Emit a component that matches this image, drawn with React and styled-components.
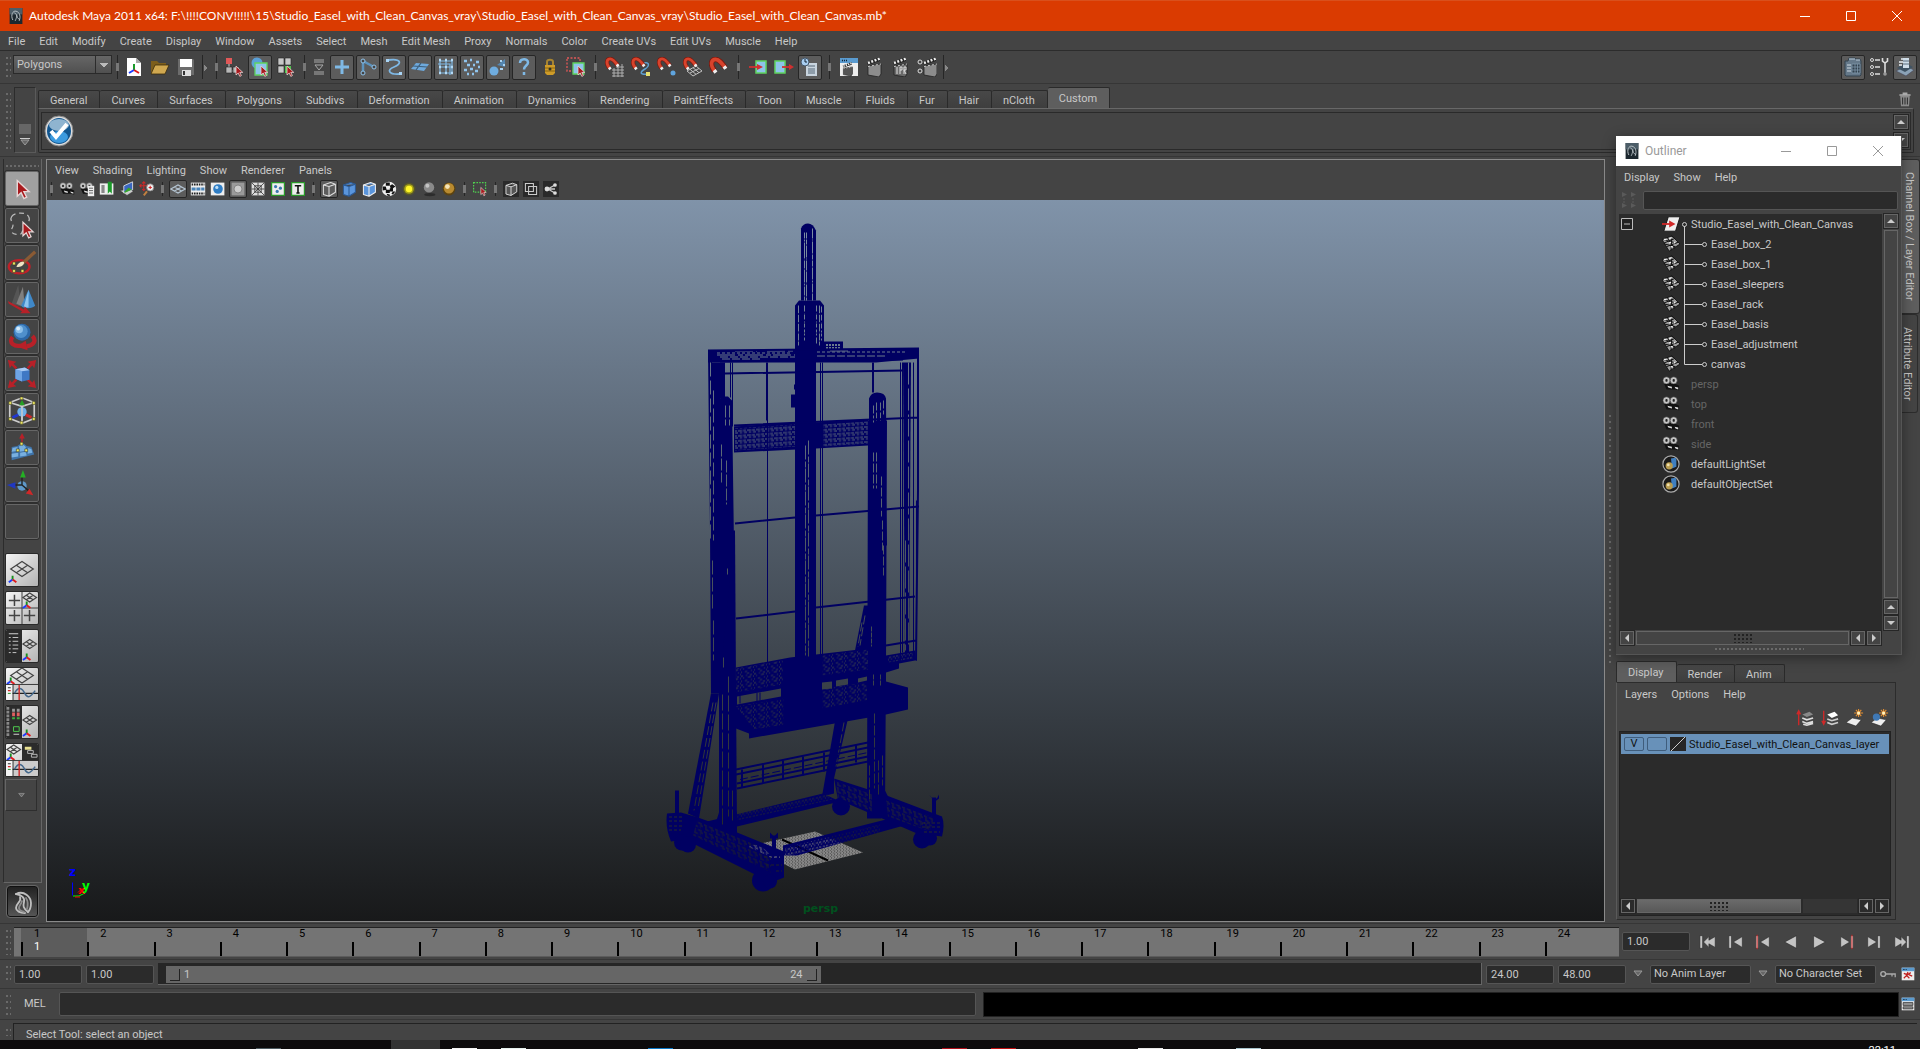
import React, { useState } from 'react';
import styled, { createGlobalStyle, css } from 'styled-components';

const mainMenu = [
  'File', 'Edit', 'Modify', 'Create', 'Display', 'Window', 'Assets', 'Select', 'Mesh',
  'Edit Mesh', 'Proxy', 'Normals', 'Color', 'Create UVs', 'Edit UVs', 'Muscle', 'Help',
];

const shelfTabs = [
  'General', 'Curves', 'Surfaces', 'Polygons', 'Subdivs', 'Deformation', 'Animation',
  'Dynamics', 'Rendering', 'PaintEffects', 'Toon', 'Muscle', 'Fluids', 'Fur', 'Hair',
  'nCloth', 'Custom',
];

// "|" is a separator, "||" a wide one, ">" one with an expander arrow,
// "*" marks a pressed button
const statusItems = [
  'newScene', 'openScene', 'saveScene', '>', '|', 'hierarchy', '*object', 'component', '|',
  'maskMenu', '*handles', '*joints', '*curves', '*surfaces', '*lattice', '*dynamics',
  '*rendering', '*misc', 'lock', 'highlight', '||', 'snapGrid', 'snapCurve', 'snapPoint',
  'snapPlane', 'snapLive', '||', 'inputs', 'outputs', '*history', '||', 'renderView', 'render',
  'ipr', 'renderSettings', '>',
];

const panelItems = [
  '|', 'camera', 'cameraAttr', 'bookmark', 'imagePlane', 'panZoom', '|', '*grid', 'filmGate',
  'resGate', '*gateMask', 'fieldChart', 'safeAction', 'safeTitle', '|', '*wire', 'shaded',
  'wireShaded', 'checker', 'lights', 'shadows', 'quality', '|', 'isolate', '|', 'xray',
  'xrayActive', 'xrayJoints',
];

const tools = [
  'select', 'lasso', 'paint', 'move', 'rotate', 'scale', 'manipulator', 'softMod', 'showManip', 'lastTool',
];

const layouts = ['single', 'four', 'outlinerPersp', 'perspGraph', 'hyperPersp', 'perspHyperGraph'];

const outlinerItems = [
  { name: 'Studio_Easel_with_Clean_Canvas', type: 'group' },
  { name: 'Easel_box_2', type: 'mesh' },
  { name: 'Easel_box_1', type: 'mesh' },
  { name: 'Easel_sleepers', type: 'mesh' },
  { name: 'Easel_rack', type: 'mesh' },
  { name: 'Easel_basis', type: 'mesh' },
  { name: 'Easel_adjustment', type: 'mesh' },
  { name: 'canvas', type: 'mesh', last: true },
  { name: 'persp', type: 'camera' },
  { name: 'top', type: 'camera' },
  { name: 'front', type: 'camera' },
  { name: 'side', type: 'camera' },
  { name: 'defaultLightSet', type: 'set' },
  { name: 'defaultObjectSet', type: 'set' },
];

const frames = Array.from({ length: 24 }, (_, i) => i + 1);

const taskbarMarks = [
  '', '#4d5a60', '', '', '#3a4653', '#f4f4f4', '#e6f1ee', '', '', '#0a78c8',
  '', '', '', '', '', '#b0101a', '#c01010', '', '', '#e8e8e8', '', '#a8c4cc',
];

const cursorPath = 'M0 0v9l2.2-2 1.6 3.4 1.6-.8L3.8 6.4h3z';

function Cursor({ x = 12, y = 9, s = 1 }) {
  return (
    <path
      d={cursorPath}
      transform={`translate(${x} ${y}) scale(${s})`}
      fill="#a81a1e"
      stroke="#e8d8d8"
      strokeWidth=".8"
    />
  );
}

function Clapper({ x = 2, fill = '#8c8c8c' }) {
  return (
    <g transform={`translate(${x} 0)`}>
      <path d="M1 9l13-2v10l-2 3-11-2z" fill={fill} stroke="#222" strokeWidth=".8" />
      <path d="M0 5L13 0v4L1 8z" fill="#222" />
      <path d="M1 6L13 1.5" stroke="#eee" strokeWidth="2.5" strokeDasharray="2 1.5" />
      <path d="M1 9.5l13-2.500" stroke="#ccc" strokeWidth="1" strokeDasharray="2 2" />
    </g>
  );
}

function Magnet({ s = 1 }) {
  return (
    <g transform={`scale(${s})`} fill="none">
      <path d="M4.5 11.5C.5 6 2 2 5.5 2c3 0 5.500 3.500 8 7" stroke="#7a1a10" strokeWidth="4.5" />
      <path d="M4.5 11.5C.5 6 2 2 5.5 2c3 0 5.500 3.500 8 7" stroke="#d8432c" strokeWidth="3" />
      <path d="M4.300 11l1.500 2M12.500 7.800l1.500 2" stroke="#eee" strokeWidth="3" />
    </g>
  );
}

function FilmCamera() {
  return (
    <g>
      <path d="M2 9h11l6 3v5l-5-1H5z" fill="#111" />
      <circle cx="5" cy="6" r="4" fill="#c4c4c4" stroke="#222" strokeWidth=".6" />
      <circle cx="13" cy="6" r="4" fill="#c4c4c4" stroke="#222" strokeWidth=".6" />
      <path d="M4 5l2 2M6 5L4 7M12 5l2 2M14 5l-2 2" stroke="#222" strokeWidth="1.3" />
      <path d="M6 12l5 1v2l-4-1zM14 13l4 1v2l-3-1z" fill="#ddd" />
    </g>
  );
}

function AppWindow({ children }) {
  return (
    <g>
      <path d="M1 1h18v18H1z" fill="#eee" />
      <path d="M1 1h18v5H1z" fill="#5a9bd0" />
      <path d="M3 3.5h5" stroke="#123" strokeWidth="1.5" strokeDasharray="1 1" />
      {children}
    </g>
  );
}

function Cube({ fill, stroke }) {
  return (
    <path
      d="M3 5l9-3 6 2v10l-8 5-7-2zM3 5l7 2 8-3M10 7v12"
      fill={fill}
      stroke={stroke}
      strokeWidth="1.3"
      strokeLinejoin="round"
    />
  );
}

const icons = {
  maya: (
    <>
      <path d="M2 0h16v20H2z" fill="#1d282f" />
      <path d="M2 0h16v8H2z" fill="#4c5d68" />
      <path d="M6 15c-3-6 0-12 4-11 5 1 6 7 4 12M8 6c4 2 3 6 1 10M11 8c0 3 1 5 4 7" fill="none" stroke="#b8c0c4" strokeWidth="1.2" />
    </>
  ),
  newScene: (
    <>
      <path d="M3 1h9l5 5v13H3z" fill="#fff" />
      <path d="M12 1l5 5h-5z" fill="#aaa" />
      <path d="M10 7v6" stroke="#1a9a2a" strokeWidth="2" />
      <path d="M10 13l-5 3" stroke="#1b3cff" strokeWidth="2" />
      <path d="M10 13l5 3" stroke="#e01b1b" strokeWidth="2" />
    </>
  ),
  openScene: (
    <>
      <path d="M1 17V4h6l2 2h7v4" fill="#7d5e1c" />
      <path d="M1 17L5 8h14l-4 9z" fill="#d0a850" stroke="#3a2b0a" strokeWidth=".8" />
    </>
  ),
  saveScene: (
    <>
      <path d="M2 2h15l1 1v15H2z" fill="#6c6c6c" />
      <path d="M4 2h12v8H4z" fill="#fff" />
      <path d="M6 13h9v6H6z" fill="#ddd" />
      <path d="M7 14h2v4H7z" fill="#333" />
    </>
  ),
  hierarchy: (
    <>
      <path d="M2 1h6v6H2z" fill="#e05858" />
      <path d="M5 7v7h6" fill="none" stroke="#ccc" />
      <path d="M2 10h6v6H2zM9 10h6v6H9z" fill="#b8b8b8" stroke="#222" strokeWidth=".6" />
      <Cursor x={12} y={9} />
    </>
  ),
  object: (
    <>
      <circle cx="7" cy="6" r="5.5" fill="#5aa0d8" />
      <path d="M5 6h12v12H5z" fill="#8ec4ea" stroke="#5fd35f" strokeWidth="1.3" />
      <Cursor x={11} y={9} />
    </>
  ),
  component: (
    <>
      <path d="M2 1h6v7H2zM9 1h6v7H9zM2 9h6v7H2z" fill="#c8c8c8" stroke="#222" strokeWidth=".6" />
      <path d="M9 9h6v7H9z" fill="#4cc24c" />
      <Cursor x={11} y={9} />
    </>
  ),
  maskMenu: (
    <path d="M5 3h10M5 5h10M5 15h10M5 17h10M6 8h8l-4 5z" fill="none" stroke="#aaa" />
  ),
  handles: (
    <path d="M10 3v14M3 10h14" stroke="#7fb9e6" strokeWidth="3" />
  ),
  joints: (
    <>
      <path d="M5 4v11M5 4l11 6" stroke="#5d93bd" strokeWidth="2.5" />
      <circle cx="5" cy="4" r="2" fill="#444" stroke="#8fc4ee" />
      <circle cx="5" cy="16" r="2" fill="#444" stroke="#8fc4ee" />
      <circle cx="16" cy="10" r="2" fill="#444" stroke="#8fc4ee" />
    </>
  ),
  curves: (
    <>
      <path d="M4 3c14-2 14 4 6 7s-5 8 6 7" fill="none" stroke="#7fb9e6" strokeWidth="1.8" />
      <path d="M2 2h3v3H2zM15 15h3v3h-3z" fill="#a9d4f5" />
    </>
  ),
  surfaces: (
    <>
      <path d="M1 12l5-6 13 1-5 7z" fill="#6ea9dc" />
      <path d="M3 9l14 1M11 6l-5 7" stroke="#3c5c78" strokeWidth="1.2" />
    </>
  ),
  lattice: (
    <>
      <path d="M4 4h12v12H4zM4 10h12M10 4v12M2 7h12v11" fill="none" stroke="#7fb9e6" strokeWidth="1.2" />
      <path d="M3 3h2M9 3h2M15 3h2M3 10h2M9 10h2M15 10h2M3 16h2M9 16h2M15 16h2" stroke="#b4daf6" strokeWidth="2.5" />
    </>
  ),
  dynamics: (
    <path d="M2 4h3M8 3h2M14 5h3M5 8h3M11 8h2M16 10h2M2 13h3M8 12h3M13 14h3M5 17h2M10 17h2" stroke="#8fc4ee" strokeWidth="2.5" />
  ),
  rendering: (
    <>
      <circle cx="6" cy="14" r="4.5" fill="#6fade0" />
      <path d="M9 8l8-6v8z" fill="#5486b0" />
      <path d="M12 4h2M15 8h2M12 12h3" stroke="#aad4f4" strokeWidth="2" />
    </>
  ),
  misc: (
    <path d="M6 6c0-5 8-5 8-.5 0 3-4 3-4 7M10 15v3" fill="none" stroke="#7fb9e6" strokeWidth="2.5" />
  ),
  lock: (
    <>
      <path d="M7 9V5c0-3 6-3 6 0v4" fill="none" stroke="#a88530" strokeWidth="2" />
      <path d="M5 8h10v8l-2 2H7l-2-2z" fill="#cf9c28" />
      <path d="M5 11h10M5 14h10" stroke="#8a6410" />
      <circle cx="10" cy="12" r="1.5" fill="#332" />
    </>
  ),
  highlight: (
    <>
      <path d="M1 1h13v13H1z" fill="none" stroke="#e05858" strokeWidth="1.3" strokeDasharray="2 1.5" />
      <path d="M7 6h11v11H7z" fill="#8ec4ea" stroke="#5fd35f" strokeWidth="1.3" />
      <Cursor x={12} y={9} />
    </>
  ),
  snapGrid: (
    <>
      <path d="M7 13h12M7 16h12M7 19h12M9 11v9M13 9v11M17 7v13M11 10h8" stroke="#b8b8b8" strokeWidth=".9" />
      <Magnet s={0.95} />
    </>
  ),
  snapCurve: (
    <>
      <path d="M10 7c9-4 9 2 4 5s-6 6 3 5" fill="none" stroke="#5f9fd0" strokeWidth="1.5" />
      <path d="M15 15h4v4h-4z" fill="#e8e070" />
      <Magnet s={0.95} />
    </>
  ),
  snapPoint: (
    <>
      <circle cx="16" cy="16" r="2.5" fill="#5fa4de" />
      <Magnet s={0.95} />
    </>
  ),
  snapPlane: (
    <>
      <path d="M4 14l9-5 6 5-9 5zM7 12.3l6 5M10 10.700l6 5M7 16l9-4.500" fill="none" stroke="#c0c0c0" />
      <Magnet s={0.95} />
    </>
  ),
  snapLive: <Magnet s={1.2} />,
  inputs: (
    <>
      <path d="M8 4h10v12H8z" fill="#8ec4ea" stroke="#5fd35f" strokeWidth="1.5" />
      <path d="M1 10h9" stroke="#d03030" strokeWidth="1.8" />
      <path d="M9 7l6 3-6 3z" fill="#d03030" />
    </>
  ),
  outputs: (
    <>
      <path d="M1 4h10v12H1z" fill="#8ec4ea" stroke="#5fd35f" strokeWidth="1.5" />
      <path d="M8 10h8" stroke="#d03030" strokeWidth="1.8" />
      <path d="M15 7l5 3-5 3z" fill="#d03030" />
    </>
  ),
  history: (
    <>
      <path d="M6 6h11v13H6z" fill="#c8d4de" />
      <path d="M8 9h7M8 12h7M8 14h7M8 16h7" stroke="#567" />
      <circle cx="5" cy="5" r="4" fill="#a8cdf0" stroke="#456" />
      <path d="M5 2v3h2" fill="none" stroke="#123" />
    </>
  ),
  renderView: (
    <AppWindow>
      <g transform="translate(3 5) scale(.7)">
        <Clapper x={1} fill="#555" />
      </g>
    </AppWindow>
  ),
  render: <Clapper />,
  ipr: (
    <>
      <Clapper fill="#6a6a6a" />
      <path d="M6 10v7M9 17v-7h2v3H9M13 17v-7h2v3h-2l2 4" fill="none" stroke="#ddd" strokeWidth="1" />
    </>
  ),
  renderSettings: (
    <>
      <Clapper x={6} />
      <circle cx="3" cy="5" r="2" fill="none" stroke="#ddd" />
      <circle cx="3" cy="14" r="2" fill="none" stroke="#ddd" />
    </>
  ),
  channelBox: (
    <>
      <path d="M2 4h3l1-3h6l1 1h4l1 2v14l-1 1H3l-1-1z" fill="#65798a" stroke="#33424f" />
      <path d="M6 2h6M13 3h4" stroke="#b8c8d4" />
      <path d="M4 8h4M4 11h4M4 14h4" stroke="#cfdae2" />
      <path d="M9 7h8v9H9zM9 10h8M9 13h8M12 7v9M14.5 7v9" fill="#33424f" stroke="#7e97aa" strokeWidth=".8" />
    </>
  ),
  toolSettings: (
    <>
      <circle cx="3" cy="3" r="1.5" fill="none" stroke="#ddd" />
      <circle cx="3" cy="10" r="1.5" fill="none" stroke="#ddd" />
      <circle cx="3" cy="17" r="1.5" fill="none" stroke="#ddd" />
      <path d="M6 3h5M6 10h5M6 17h5" stroke="#ddd" strokeWidth="1.3" />
      <path d="M16 5v12M13.5 1v3l2.500 2 2.500-2V1" fill="none" stroke="#ddd" strokeWidth="1.6" />
      <circle cx="16" cy="17" r="1.8" fill="#999" />
    </>
  ),
  layerEditor: (
    <>
      <path d="M1 14l10-5 8 4-8 6z" fill="#8ba2b6" stroke="#445" strokeWidth=".6" />
      <path d="M2 11l9-5 7 4-8 5z" fill="#3f5363" />
      <path d="M6 2h7M4 5h10M4 8h3" stroke="#e8eef2" strokeWidth="1.3" />
      <path d="M8 1h6v10H8z" fill="#cfdde8" />
      <path d="M8 4h6M8 7h6" stroke="#5a6e7e" />
    </>
  ),
  trash: (
    <>
      <path d="M4 6h12l-1 13H5z" fill="#8a8a8a" />
      <path d="M7 8v9M10 8v9M13 8v9" stroke="#333" strokeWidth="1.4" />
      <path d="M3 4h14v2H3zM7 2h6v2H7z" fill="#aaa" />
    </>
  ),
  camera: <FilmCamera />,
  cameraAttr: (
    <>
      <FilmCamera />
      <path d="M11 6h8v13h-8z" fill="#eee" />
      <path d="M12.5 9h5M12.5 12h5M12.5 15h5" stroke="#444" />
    </>
  ),
  bookmark: (
    <>
      <path d="M1 3h17v14H1z" fill="#eee" />
      <path d="M3 5h4v10H3z" fill="#888" />
      <path d="M11 1h5v15l-2.500-3-2.500 3z" fill="#1c9a2a" />
    </>
  ),
  imagePlane: (
    <>
      <path d="M1 12l9 6 8-5-5-3z" fill="#ccc" stroke="#222" strokeWidth=".6" />
      <path d="M6 6l11-5v10L6 15z" fill="#3a68c0" stroke="#eee" />
      <path d="M7 13l5-5 4 3-9 4z" fill="#3aa52c" />
    </>
  ),
  panZoom: (
    <>
      <path d="M6 1v11M1 6h11M4 3l2-2 2 2M4 10l2 2 2-2M3 4L1 6l2 2M10 4l2 2" fill="none" stroke="#d02828" strokeWidth="1.3" />
      <path d="M6 18l4-5" stroke="#c08040" strokeWidth="2.5" />
      <circle cx="14" cy="8" r="4.5" fill="#eee" stroke="#777" />
      <path d="M12 8h4M14 6v4" stroke="#d02828" strokeWidth="1.3" />
    </>
  ),
  grid: (
    <path d="M1 10l9-5 9 5-9 5zM5.5 7.5l9 5M14.5 7.5l-9 5" fill="none" stroke="#b4c4d2" strokeWidth="1.5" />
  ),
  filmGate: (
    <>
      <path d="M1 2h18v16H1z" fill="#eee" />
      <path d="M2 4.5h16M2 15.5h16" stroke="#222" strokeWidth="2.5" strokeDasharray="2 1" />
      <path d="M2 8h5v4H2zM8 8h5v4H8zM14 8h4v4h-4z" fill="#4a84b8" />
    </>
  ),
  resGate: (
    <>
      <path d="M1 2h17v16H1z" fill="#eee" />
      <circle cx="10" cy="10" r="6" fill="#2f7dc4" />
      <circle cx="8.5" cy="8" r="2" fill="#bfe0f8" />
    </>
  ),
  gateMask: (
    <>
      <path d="M2 2h16v16H2z" fill="#9a9a9a" />
      <circle cx="10" cy="10" r="5" fill="#ccc" stroke="#777" />
    </>
  ),
  fieldChart: (
    <>
      <path d="M2 2h16v16H2z" fill="#ddd" />
      <path d="M2 2l16 16M18 2L2 18M10 2v16M2 10h16M6 6h8v8H6z" fill="none" stroke="#333" />
    </>
  ),
  safeAction: (
    <>
      <path d="M2 2h16v16H2z" fill="#eee" stroke="#2a9a2a" strokeWidth="1.5" />
      <circle cx="7" cy="7" r="2" fill="#3a78b0" />
      <circle cx="13" cy="9" r="2" fill="#3a78b0" />
      <circle cx="9" cy="13" r="2" fill="#3a78b0" />
    </>
  ),
  safeTitle: (
    <>
      <path d="M2 2h16v16H2z" fill="#eee" stroke="#2a9a2a" strokeWidth="1.5" />
      <path d="M6 6h8M10 6v9M8 15h4" fill="none" stroke="#111" strokeWidth="2" />
    </>
  ),
  wire: <Cube fill="none" stroke="#ddd" />,
  shaded: <Cube fill="#5a95dc" stroke="#2c5a94" />,
  wireShaded: <Cube fill="#5a95dc" stroke="#eee" />,
  checker: (
    <>
      <circle cx="10" cy="10" r="9" fill="#eee" />
      <path d="M6 2h5v4H6zM14 4l4 3-3 2h-3l-1-3zM2 7h4l1 4-5 1zM11 9h4v4h-4zM6 11h5v4H6zM15 13h3l-3 4-2-1zM7 16l4 1v2l-3-1z" fill="#111" />
    </>
  ),
  lights: (
    <>
      <circle cx="10" cy="10" r="8" fill="#56552c" />
      <circle cx="10" cy="10" r="6" fill="#a8a418" />
      <circle cx="10" cy="10" r="4" fill="#fff428" />
    </>
  ),
  shadows: (
    <>
      <ellipse cx="11" cy="17" rx="7" ry="2" fill="#2c2c2c" />
      <circle cx="10" cy="8" r="6.5" fill="#8a8a8a" />
      <circle cx="8" cy="6" r="2.5" fill="#c4c4c4" />
    </>
  ),
  quality: (
    <>
      <circle cx="10" cy="10" r="8" fill="#5c4310" />
      <circle cx="10" cy="9" r="6.5" fill="#b88a30" />
      <circle cx="8" cy="7" r="3" fill="#f4e4b8" />
    </>
  ),
  isolate: (
    <>
      <path d="M2 2h15v12H2z" fill="none" stroke="#4fd04f" strokeWidth="1.5" strokeDasharray="2 1.5" />
      <Cursor x={11} y={8} />
    </>
  ),
  xray: (
    <>
      <path d="M0 0h20v20H0z" fill="#2a2a2a" />
      <g transform="translate(1 1) scale(.9)">
        <Cube fill="#555" stroke="#ddd" />
      </g>
    </>
  ),
  xrayActive: (
    <>
      <path d="M0 0h20v20H0z" fill="#2a2a2a" />
      <path d="M3 3h10v10H3zM7 7h10v10H7z" fill="none" stroke="#ccc" strokeWidth="1.3" />
    </>
  ),
  xrayJoints: (
    <>
      <path d="M0 0h20v20H0z" fill="#2a2a2a" />
      <path d="M15 5L6 10l9 5M6 10h9" stroke="#ccc" strokeWidth="1.6" fill="none" />
      <circle cx="5" cy="10" r="3" fill="#ddd" />
      <circle cx="15" cy="5" r="2.3" fill="#ddd" />
      <circle cx="15" cy="15" r="2.3" fill="#ddd" />
    </>
  ),
  group: (
    <>
      <path d="M7 2h13l-5 16H2z" fill="#eee" stroke="#111" />
      <path d="M0 10h9" stroke="#d02828" strokeWidth="2" />
      <path d="M8 6l7 4-7 4z" fill="#d02828" />
    </>
  ),
  mesh: (
    <>
      <path d="M0 5l11-4 9 9-12 8z" fill="#9c9c9c" stroke="#111" />
      <path d="M6 3l8 12M2 9l12-5M5 13l13-5M1 5l15 4M3 10l12 3M11 1l-1 16" fill="none" stroke="#111" strokeWidth="1.1" />
      <path d="M2 5l3 0M8 4l3-1M8 9l2-1M13 9l2-1M10 13l2 0" stroke="#eee" strokeWidth="1.5" />
    </>
  ),
  set: (
    <>
      <circle cx="10" cy="10" r="9" fill="#1a1a1a" stroke="#aaa" strokeWidth="1.3" />
      <path d="M10 4l5-1 1 2v8l-5 2z" fill="#3f7fc0" />
      <circle cx="8" cy="12" r="4" fill="#b89c50" />
      <circle cx="7" cy="11" r="1.5" fill="#efe0b0" />
    </>
  ),
  layerUp: (
    <>
      <path d="M3 18V3M1 6l2-4 2 4" fill="none" stroke="#d02828" strokeWidth="1.5" />
      <path d="M7 6l8-3 4 3-7 3z" fill="#888" />
      <path d="M7 10l5 2 7-2M7 14l5 2 7-2M8 17l4 1 7-2" fill="none" stroke="#ddd" strokeWidth="1.8" />
    </>
  ),
  layerDown: (
    <>
      <path d="M3 2v15M1 13l2 4 2-4" fill="none" stroke="#d02828" strokeWidth="1.5" />
      <path d="M7 6l8-3 4 4-7 3z" fill="#fff" />
      <path d="M7 11l5 2 7-2M7 15l5 2 7-2" fill="none" stroke="#ccc" strokeWidth="1.8" />
    </>
  ),
  layerNew: (
    <>
      <path d="M0 15l7-5 10 2-6 7z" fill="#eee" stroke="#222" strokeWidth=".6" />
      <path d="M14 0v9M9 4.5h10M11 1l6 7M17 1l-6 7" stroke="#e89030" strokeWidth="1.2" />
      <circle cx="14" cy="4.5" r="1.8" fill="#fff4c0" />
    </>
  ),
  layerNewSelected: (
    <>
      <path d="M0 15l7-5 10 2-6 7z" fill="#eee" stroke="#222" strokeWidth=".6" />
      <circle cx="6" cy="9" r="4" fill="#3f78b4" />
      <path d="M14 0v9M9 4.5h10M11 1l6 7M17 1l-6 7" stroke="#e89030" strokeWidth="1.2" />
      <circle cx="14" cy="4.5" r="1.8" fill="#fff4c0" />
    </>
  ),
  key: (
    <>
      <circle cx="4" cy="10" r="3" fill="none" stroke="#aaa" strokeWidth="1.8" />
      <path d="M7 10h12v4M15 10v3" fill="none" stroke="#aaa" strokeWidth="1.6" />
    </>
  ),
  prefs: (
    <AppWindow>
      <path d="M4 9l5 2 5-3M10 7l-2 5 4 4M8 12l-4 4M11 11l5 2" fill="none" stroke="#c02020" strokeWidth="1.8" />
    </AppWindow>
  ),
  scriptEditor: (
    <AppWindow>
      <path d="M3 8h14v4H3zM3 14h14v3H3z" fill="#999" stroke="#222" />
    </AppWindow>
  ),
};

function Icon({ name, size = 20 }) {
  return (
    <svg width={size} height={size} viewBox="0 0 20 20" aria-hidden="true">
      {icons[name]}
    </svg>
  );
}

const redArrows = 'M3 3l9 2-3 2 4 4-2 2-4-4-2 3zM33 3l-9 2 3 2-4 4 2 2 4-4 2 3zM3 33l9-2-3-2 4-4-2-2-4 4-2-3zM33 33l-9-2 3-2-4-4 2-2 4 4 2-3z';

const toolIcons = {
  select: <Cursor x={13} y={9} s={1.85} />,
  lasso: (
    <>
      <path d="M7 8c3-5 16-5 18 0M7 8c-3 4 3 7 1 11s-2 7 4 8 6-2 7-5M25 8c1 2 1 4 0 5" fill="none" stroke="#bbb" strokeWidth="1.3" strokeDasharray="5 4" />
      <Cursor x={19} y={14} s={1.6} />
    </>
  ),
  paint: (
    <>
      <ellipse cx="15" cy="22" rx="11" ry="7" fill="none" stroke="#c02028" strokeWidth="2.5" />
      <path d="M32 6L19 18" stroke="#8a5a34" strokeWidth="3.5" />
      <path d="M12 22c2-4 5-6 8-5 1 3-3 6-8 5z" fill="#f0e4c4" />
      <path d="M8 17h3v3H8zM8 25h3v3H8zM17 25h3v3h-3z" fill="#eee860" stroke="#332" strokeWidth=".6" />
    </>
  ),
  move: (
    <>
      <path d="M14 2L7 22l10 3z" fill="#555" />
      <path d="M19 4l-7 18 9 4z" fill="#808080" />
      <path d="M25 7l-8 17c4 4 12 3 15 0z" fill="#3f88c8" />
      <path d="M25 7l-5 18c2 1 4 1 5 1z" fill="#8cc4f0" />
      <path d="M3 19l17 9 1-3 6 7H16l2-2L4 22z" fill="#b82028" />
    </>
  ),
  rotate: (
    <>
      <path d="M8 18c-5 6 2 11 10 9M29 17c5 5 1 10-6 11" fill="none" stroke="#b82028" strokeWidth="4.5" />
      <path d="M12 28l10-6 2 10z" fill="#b82028" />
      <circle cx="18" cy="13" r="9" fill="#2c68a8" />
      <circle cx="17" cy="12" r="7" fill="#4f90cc" />
      <circle cx="15" cy="10" r="4" fill="#8cc0ea" />
      <circle cx="14" cy="9" r="2" fill="#d8ecfb" />
    </>
  ),
  scale: (
    <>
      <path d={redArrows} fill="#b82028" />
      <path d="M11 13l10-2 5 3v10l-8 2-7-3z" fill="#3f78c4" />
      <path d="M11 13l7 2v11l-7-3z" fill="#6ea4e4" />
      <path d="M11 13l10-2 5 3-8 1z" fill="#a8caf4" />
    </>
  ),
  manipulator: (
    <>
      <path d="M5 9l13-5 13 5v17l-13 5-13-5zM5 9l13 4 13-4M18 13v18" fill="none" stroke="#ccc" strokeWidth="1.8" />
      <circle cx="18" cy="19" r="5" fill="#6fb0e8" />
      <path d="M18 6l-3 6h6z" fill="#24a024" />
      <path d="M14 22l-6 3" stroke="#2038d0" strokeWidth="3" />
      <path d="M22 22l6 3" stroke="#d02828" strokeWidth="3" />
      <path d="M18 13v18" stroke="#ccc" strokeWidth="1.5" />
      <path d="M4 8h3v3H4zM16 3h3v3h-3zM29 8h3v3h-3zM4 25h3v3H4zM29 25h3v3h-3zM16 29h3v3h-3z" fill="#eee860" stroke="#332" strokeWidth=".6" />
    </>
  ),
  softMod: (
    <>
      <path d="M7 17l6-1 5-4 5 4 5 1 3 8-24 6z" fill="#3f74aa" />
      <path d="M8 18l5-1 1 4-7 1zM15 16l4-2 3 3v4l-7 1zM7 24l7-1v4l-7 1zM16 23l6-1 1 4-7 1zM24 18l4 1 1 4-5 1z" fill="#78b0e0" />
      <path d="M18 13V5" stroke="#b82028" strokeWidth="1.5" />
      <path d="M18 2l-3 6h6z" fill="#b82028" />
      <path d="M16 12h3v3h-3zM12 19h3v3h-3zM21 19h3v3h-3z" fill="#eee860" stroke="#332" strokeWidth=".6" />
    </>
  ),
  showManip: (
    <>
      <circle cx="18" cy="19" r="5" fill="#5f98c8" />
      <path d="M18 18V8M18 18H8M18 18l7 6" stroke="#222" strokeWidth="1.5" />
      <path d="M19 2l-3 8h6z" fill="#24b024" />
      <path d="M2 18l9-3v7z" fill="#2038c0" />
      <path d="M30 29l-8-2 4-5z" fill="#d02828" />
    </>
  ),
  lastTool: null,
};

function MiniGrid({ x, y, s = 1, ax = 0, ay = 14 }) {
  return (
    <g fill="none">
      <path
        d="M0 8L12 0l12 8-12 8zM6 4l12 8M18 4L6 12"
        transform={`translate(${x} ${y}) scale(${s})`}
        stroke="#444"
        strokeWidth={1.3 / s}
      />
      <g transform={`translate(${ax} ${ay})`}>
        <path d="M5 5V1" stroke="#18901c" strokeWidth="2" />
        <path d="M5 5L1 8" stroke="#1b3cff" strokeWidth="2" />
        <path d="M5 5l4 3" stroke="#e01b1b" strokeWidth="2" />
      </g>
    </g>
  );
}

const graphPane = (
  <>
    <path d="M0 18h34v16H0z" fill="#ccc" />
    <path d="M0 18h7v16H0z" fill="#f4f4f4" />
    <path d="M0 17.5h34M7.5 18v16" stroke="#333" />
    <path d="M7 27h27" stroke="#222" strokeWidth="1.5" />
    <path d="M9 27c4-8 8-6 11 0s6 4 11-3" fill="none" stroke="#44688c" strokeWidth="1.6" />
    <path d="M14 18v16M2 24h3" stroke="#d02828" strokeWidth="1.5" />
    <path d="M2 21h3" stroke="#222" />
    <path d="M2 27h3" stroke="#18901c" />
  </>
);

const layoutIcons = {
  single: <MiniGrid x={5} y={8} ax={2} ay={22} />,
  four: (
    <>
      <path d="M17 0v34M0 17h34" stroke="#333" />
      <path d="M9 3v12M3 9h12M9 19v12M3 25h12M25 19v12M19 25h12" stroke="#444" strokeWidth="1.6" />
      <MiniGrid x={18} y={1} s={0.6} ax={17} ay={9} />
    </>
  ),
  outlinerPersp: (
    <>
      <path d="M0 0h17v34H0z" fill="#2b2b2b" />
      <path d="M3 4h10" stroke="#ddd" />
      <path d="M3 8h10M3 12h10M3 16h10M3 20h10M3 24h8" stroke="#ccc" strokeDasharray="2 2 6 2" />
      <MiniGrid x={18} y={10} s={0.6} ax={17} ay={24} />
    </>
  ),
  perspGraph: (
    <>
      <MiniGrid x={5} y={0} ax={0} ay={9} />
      {graphPane}
    </>
  ),
  hyperPersp: (
    <>
      <path d="M0 0h17v34H0z" fill="#2b2b2b" />
      <path d="M2 1v32" stroke="#888" strokeWidth="3" strokeDasharray="3 1" />
      <path d="M8 3v3M13 3v3" stroke="#999" strokeWidth="3" />
      <path d="M8 7v4M13 7v4" stroke="#e06060" strokeWidth="3" />
      <path d="M8 12v2M13 12v2" stroke="#40b040" strokeWidth="3" />
      <path d="M8 22h6v5H8z" fill="none" stroke="#50d050" />
      <path d="M8 30h6" stroke="#ddd" />
      <MiniGrid x={18} y={10} s={0.6} ax={17} ay={24} />
    </>
  ),
  perspHyperGraph: (
    <>
      <path d="M17 0h17v18H17z" fill="#2b2b2b" />
      <path d="M20 3h7v3h-7z" fill="#e8e090" />
      <path d="M23 7h6v3h-6zM27 11h6v3h-6z" fill="none" stroke="#bbb" />
      <MiniGrid x={1} y={1} s={0.6} ax={0} ay={9} />
      {graphPane}
    </>
  ),
};

const playIcons = {
  'Go to start': 'M1 1h3v14H1zM11 2v4l7-4v12l-7-4v4L5 8z',
  'Step back frame': 'M2 1h3v14H2zM17 2v12L7 8z',
  'Step back key': 'M2 1h3v14H2zM17 2v12L7 8z',
  'Play backwards': 'M16 1v14L3 8z',
  'Play forwards': 'M4 1v14l13-7z',
  'Step forward key': 'M3 2v12l10-6zM14 1h3v14h-3z',
  'Step forward frame': 'M3 2v12l10-6zM14 1h3v14h-3z',
  'Go to end': 'M9 2v4L2 2v12l7-4v4l6-6zM15 1h3v14h-3z',
};

// Wireframe of the easel, in the coordinates of the persp view
function Easel() {
  return (
    <Scene viewBox="47 200 1557 720" role="img" aria-label="Easel wireframe">
      <defs>
        <pattern id="weave" width="9" height="5" patternUnits="userSpaceOnUse" patternTransform="skewY(-4)">
          <path d="M0 2h4M5 2h3M2 4h2M6 4h3" stroke="#000" strokeWidth="1" />
        </pattern>
        <pattern id="dots" width="13" height="9" patternUnits="userSpaceOnUse" patternTransform="skewY(-11)">
          <path d="M0 1h2M5 1h1M9 1h2M2 3h1M7 3h3M12 3h1M0 6h1M4 6h2M10 6h1M6 8h2M12 8h1" stroke="#000" strokeWidth="1" />
        </pattern>
        <pattern id="beam" width="7" height="5" patternUnits="userSpaceOnUse" patternTransform="skewY(-12)">
          <path d="M0 1h2M4 1h2M2 3h1M6 3h1" stroke="#000" strokeWidth="1" />
        </pattern>
        <pattern id="beamDown" width="11" height="7" patternUnits="userSpaceOnUse" patternTransform="skewY(22)">
          <path d="M0 1h3M5 1h4M1 3h2M7 3h3M1 5h4M7 5h1" stroke="#000" strokeWidth="1" />
        </pattern>
        <pattern id="floor" width="3" height="3" patternUnits="userSpaceOnUse" patternTransform="skewY(-10)">
          <path d="M0 0h3v3H0z" fill="#8a8a8a" />
          <path d="M0 2h1M2 0h1" stroke="#222" strokeWidth="1" />
        </pattern>
        <mask id="gaps" maskUnits="userSpaceOnUse" x="600" y="200" width="400" height="720">
          <path d="M600 200h400v720H600z" fill="#fff" />
          <g stroke="#000" strokeWidth="1" fill="none">
            <path d="M804.5 232v68" strokeDasharray="9 1 16 1" />
            <path d="M806.5 232v68M812.5 228v72" strokeDasharray="12 1" />
            <path d="M798.5 305v40M819.5 305v40" strokeDasharray="8 1" />
            <path d="M804.5 305v35M816.5 305v40M821.5 306v34" strokeDasharray="6 2" />
            <path d="M826 344.5h15M826 347.5h15" strokeDasharray="2 1" strokeWidth="2" />
            <path d="M805.5 445v210M808.5 440v216" strokeDasharray="14 2 6 1" />
            <path d="M710.5 362v180M713.5 390v150" strokeDasharray="14 4" />
            <path d="M717 352.5h75M817 351.5h90" strokeDasharray="3 2" />
            <path d="M735 350.5h22M767 350.5h28M717 354.5h78M830 350.5h20" strokeDasharray="18 3 5 2" />
            <path d="M720 356.5h75M817 355.5h70M722 358.5h40" strokeDasharray="8 2" />
            <path d="M725.5 405v20M729.5 405v20M721.5 444v38M726.5 460v44" strokeDasharray="12 2" />
            <path d="M873.5 405v17M876.5 402v18M880.5 402v20M883.5 400v14" strokeDasharray="8 2" />
            <path d="M873.5 452v36M876.5 452v36M881.5 476v40M882.5 520v30M883.5 545v30" strokeDasharray="9 2" />
            <path d="M908.5 362v285M905.5 540v110" strokeDasharray="22 4" />
            <path d="M712.5 560v50M713.5 620v40M727.5 568v6M723.5 657v10" strokeDasharray="14 3" />
            <path d="M722.5 694v130M728.5 676v140M732.5 790v30" strokeDasharray="16 3" />
            <path d="M871.5 626v20M873.5 674v12M880.5 674v12" strokeDasharray="5 1" />
            <path d="M869.5 765v35M874.5 713v75M878.5 760v35M882.5 755v30" strokeDasharray="10 2" />
          </g>
          <path d="M735 428l60-4v22l-60 4zM822 424l46-3v22l-46 3z" fill="url(#weave)" />
          <path d="M736 668l47-8v24l-47 8zM822 655l46-6v20l-46 6zM736 706l48-8v26l-30 5zM822 688l45-6v18l-45 8z" fill="url(#dots)" />
          <path d="M888 656l25-4v6l-25 4zM737 813l90-20 6 6-96 21z" fill="url(#beam)" />
          <path d="M785 847l95-23v9l-95 23z" fill="url(#beam)" />
          <path d="M697 820l66 27 8 8v17l-78-37zM836 781l36 13v17l-34-14zM886 800l48 17-4 14-42-15z" fill="url(#beamDown)" />
          <path d="M737 696l44-8v8l-44 8zM822 682l10-1v7l-10 1zM836 680l12-2v6l-12 2zM858 678l9-2v4l-9 2z" fill="#000" />
          <path d="M740 695v8M757 692v9M760 692v8" stroke="#fff" strokeWidth="1" />
          <path d="M669 816.5h14M669 820.5h14M669 825.5h14M669 829.5h12M922 822.5h18M922 826.5h18M924 831.5h16M764 856.5h16M766 864.5h16M776 870.5h6" stroke="#000" strokeDasharray="3 2" />
          <path d="M713 702l-19 108M716 702l-18 106M844 722l-8 44M862 622l-4 24M865 615l-5 30" stroke="#000" strokeDasharray="9 3" fill="none" />
        </mask>
      </defs>

      <path d="M748 846l67-15 48 21-68 17z" fill="url(#floor)" />
      <path d="M782 839l46 21" stroke="#000" strokeWidth="2" />

      <g mask="url(#gaps)" fill="#000062" stroke="none">
        <path d="M801 300v-72q2-5 7-5t8 7v70z" />
        <path d="M795 350v-45l4-5h21l4 5v45zM824 341h19v12h-19z" />
        <path d="M795 350h21v308h-21z" />
        <path d="M708 350l211-2v10l-43 4h-168z" />
        <path d="M708 350h4v180h-2zM711 362h9v170h-9zM720 362h5v36h-5z" />
        <path d="M718 545V400l4-4h6l4 4 2 145zM710 530h25v163h-24z" />
        <path d="M735 530l2 305h-18V690z" />
        <path d="M869 545V398q2-6 8-6 8 0 9 6l1 147zM868 420h19l-1 245-1 147h-18z" />
        <path d="M903 362h8l-2 296-4 2z" />
        <path d="M734 426l61-4h21l52-3v26l-52 3-82 4z" />
        <path d="M791 394h5v13h-5zM794 384h10v5h-10z" />
        <path d="M736 667l54-10 78-9 18 7 29-5v10l-16 3v5l-13 4v9l22 6v22l-22 5-137 24v-5l-13-5z" />
        <path d="M864 605h5v45h-14z" />
        <path d="M711 693h8l-20 125-11-5z" />
        <path d="M835 721l13-3-14 60v15l-12 3z" />
        <path d="M707 821l116-28 17 8-103 25-30 1z" />
        <path d="M667 813l14-1 17 5 22 8 64 26v26l-10 4-17-6-72-36-14 2q-6-14-4-28z" />
        <path d="M834 778l50 16 58 22q3 8 0 20l-25-3-79-34z" />
        <path d="M783 845l107-27 14 7-107 30h-14z" />
        <path d="M675 790h4v24h-4zM932 797h4v24h-4zM772 835h4v22h-4zM929 794l3 4h5l2-4v4l-4 3zM770 832l4 4 4-4v6h-8z" />
        <path d="M867 790h18l8 16-12 12h-14zM719 812h18v22l-10 5-14-8z" />
        <circle cx="682" cy="842" r="8" />
        <circle cx="688" cy="844" r="8" />
        <circle cx="763" cy="880" r="11" />
        <circle cx="770" cy="881" r="7" />
        <circle cx="841" cy="806" r="9" />
        <circle cx="922" cy="839" r="9" />
        <circle cx="930" cy="838" r="7" />
      </g>

      <g fill="none" stroke="#000062" strokeWidth="1">
        <path d="M804 238.5h12M804 259.5h12M804 282.5h12M796 313.5h27M796 322.5h27M796 332.5h27" />
        <path d="M732.5 362v64M730.5 362v35M766.5 362v58M767.5 362v300M820.5 362v294M822.5 362v293" />
        <path d="M872.5 362v30M873.5 362v30M900.5 362v300M902.5 362v290M913.5 362v294M917.5 350v180M916.5 500v160" />
      </g>
      <g fill="none" stroke="#000062" strokeWidth="2">
        <path d="M708 350l211-2M720 361l183-2M725 373l178-3M735 523l60-6M816 515l103-9M736 618l59-7M816 607l99-11" />
        <path d="M734 425l184-8M918 350v70M918 350v140l-2 170M886 645l30-5" />
        <path d="M736 769l132-27M736 774l132-27M737 783l131-27M737 788l131-27" />
        <path d="M742 769v18M763 764v19M783 760v19M803 756v19M824 752v19M856 744v18" />
      </g>
      <g fill="none" stroke="#000062" strokeWidth="1">
        <path d="M740 779l128-27" strokeDasharray="8 3" />
      </g>

      <text x="803" y="911" fill="#00501e" fontSize="11" fontWeight="700">persp</text>
      <path d="M72.5 882v13" stroke="#0000ff" />
      <path d="M73 895.5h6l6-3" fill="none" stroke="#00ff00" />
      <path d="M75 896.5h5M82 888l-4 4" stroke="#ff0000" />
      <text x="69" y="875" fill="#0000ff" fontSize="12" fontWeight="700">z</text>
      <text x="78" y="893" fill="#ff0000" fontSize="11" fontWeight="700">x</text>
      <text x="82" y="889" fill="#00ff00" fontSize="12" fontWeight="700">y</text>
    </Scene>
  );
}

function Toolbar({ items, small }) {
  return items.map((item, index) => {
    if (item === '|' || item === '||' || item === '>') {
      return <Divider key={index} $small={small} $wide={item === '||'} $arrow={item === '>'} />;
    }
    const name = item.replace('*', '');
    return (
      <ToolButton
        key={index}
        $small={small}
        $narrow={name === 'maskMenu'}
        $pressed={item !== name}
        aria-label={name}
      >
        <Icon name={name} size={small ? 16 : 20} />
      </ToolButton>
    );
  });
}

function WindowControls({ size = 10 }) {
  return (
    <>
      <WindowButton aria-label="Minimize">
        <svg width={size} height={size} viewBox="0 0 10 10"><path d="M0 5.5h10" stroke="currentColor" /></svg>
      </WindowButton>
      <WindowButton aria-label="Maximize">
        <svg width={size} height={size} viewBox="0 0 10 10"><path d="M.5.5h9v9h-9z" fill="none" stroke="currentColor" /></svg>
      </WindowButton>
      <WindowButton aria-label="Close">
        <svg width={size} height={size} viewBox="0 0 10 10"><path d="M0 0l10 10M10 0L0 10" stroke="currentColor" /></svg>
      </WindowButton>
    </>
  );
}

function ScrollArrow({ dir }) {
  const paths = { up: 'M1 7l4-4 4 4z', down: 'M1 3l4 4 4-4z', left: 'M7 1L3 5l4 4z', right: 'M3 1l4 4-4 4z' };
  return (
    <ScrollButton aria-label={`Scroll ${dir}`}>
      <svg width="10" height="10" viewBox="0 0 10 10"><path d={paths[dir]} fill="#ccc" /></svg>
    </ScrollButton>
  );
}

function DownArrow({ size = 10 }) {
  return (
    <svg width={size} height={size} viewBox="0 0 10 10">
      <path d="M1 2h8L5 7z" fill="#666" stroke="#999" />
    </svg>
  );
}

function Outliner() {
  return (
    <OutlinerWindow>
      <OutlinerTitle>
        <Icon name="maya" size={16} />
        <span>Outliner</span>
        <WindowControls />
      </OutlinerTitle>
      <Menu $height={22}>
        <button>Display</button>
        <button>Show</button>
        <button>Help</button>
      </Menu>
      <SearchRow>
        <svg width="16" height="18" viewBox="0 0 16 18">
          <path d="M1 1v5l5-2.500zM1 12v5l5-2.500zM10 1v5l5-2.500zM10 12v5l5-2.500z" fill="#5a5a5a" />
          <path d="M3 7v5M12 7v5" stroke="#5a5a5a" strokeDasharray="2 1" />
        </svg>
        <Field aria-label="Filter objects" />
      </SearchRow>
      <OutlinerBody>
        <Tree>
          {outlinerItems.map((item) => (
            <TreeRow key={item.name} $dim={item.type === 'camera'}>
              <Expander>
                {item.type === 'group' && (
                  <svg width="12" height="12" viewBox="0 0 12 12">
                    <path d="M.5.5h11v11H.5zM3 6h6" fill="#222" stroke="#bbb" />
                  </svg>
                )}
              </Expander>
              <Icon name={item.type} size={18} />
              <Branch item={item} />
              <NodeName>{item.name}</NodeName>
            </TreeRow>
          ))}
        </Tree>
        <ScrollBar $vertical>
          <ScrollArrow dir="up" />
          <Thumb $flat />
          <ScrollArrow dir="up" />
          <ScrollArrow dir="down" />
        </ScrollBar>
      </OutlinerBody>
      <ScrollBar $inset>
        <ScrollArrow dir="left" />
        <Thumb $flat><Dots /></Thumb>
        <ScrollArrow dir="left" />
        <ScrollArrow dir="right" />
      </ScrollBar>
      <BottomGrip />
    </OutlinerWindow>
  );
}

function Branch({ item }) {
  if (item.type === 'group') {
    return (
      <svg width="11" height="20" viewBox="0 0 11 20">
        <circle cx="4.5" cy="10.5" r="2" fill="none" stroke="#ccc" />
        <path d="M4.5 12v8" stroke="#ccc" />
      </svg>
    );
  }
  if (item.type === 'mesh') {
    return (
      <svg width="31" height="20" viewBox="0 0 31 20">
        <path d={item.last ? 'M4.5 0v10.500H22' : 'M4.5 0v20M5 10.500h17'} fill="none" stroke="#ccc" />
        <circle cx="24.5" cy="10.5" r="2" fill="none" stroke="#ccc" />
      </svg>
    );
  }
  return <svg width="11" height="20" />;
}

function LayerEditor() {
  const [tab, setTab] = useState('Display');
  return (
    <LayerPanel>
      <LayerTabs>
        {['Display', 'Render', 'Anim'].map((name) => (
          <Tab key={name} $active={tab === name} onClick={() => setTab(name)}>{name}</Tab>
        ))}
      </LayerTabs>
      <LayerBox>
        <Menu $height={22}>
          <button>Layers</button>
          <button>Options</button>
          <button>Help</button>
        </Menu>
        <LayerTools>
          {['layerUp', 'layerDown', 'layerNew', 'layerNewSelected'].map((name) => (
            <ToolButton key={name} $small aria-label={name}>
              <Icon name={name} size={18} />
            </ToolButton>
          ))}
        </LayerTools>
        <LayerList>
          <LayerRow>
            <LayerToggle>V</LayerToggle>
            <LayerToggle aria-label="Display type" />
            <svg width="16" height="14" viewBox="0 0 16 14">
              <path d="M0 0h16v14H0z" fill="#262626" />
              <path d="M1 14L15 0" stroke="#ccc" />
            </svg>
            <NodeName>Studio_Easel_with_Clean_Canvas_layer</NodeName>
          </LayerRow>
          <ScrollBar>
            <ScrollArrow dir="left" />
            <Thumb><Dots /></Thumb>
            <Track />
            <ScrollArrow dir="left" />
            <ScrollArrow dir="right" />
          </ScrollBar>
        </LayerList>
      </LayerBox>
    </LayerPanel>
  );
}

function App() {
  const [shelf, setShelf] = useState('Custom');
  const [tool, setTool] = useState('select');

  return (
    <>
      <GlobalStyle />
      <Container>
        <TitleBar>
          <Icon name="maya" size={16} />
          <h1>
            {'Autodesk Maya 2011 x64: F:\\!!!!CONV!!!!!\\15\\Studio_Easel_with_Clean_Canvas_vray\\Studio_Easel_with_Clean_Canvas_vray\\Studio_Easel_with_Clean_Canvas.mb*'}
          </h1>
          <WindowControls />
        </TitleBar>

        <Menu $height={20} $ruled>
          {mainMenu.map((name) => (
            <button key={name}>{name}</button>
          ))}
        </Menu>

        <StatusLine>
          <Grip />
          <ModeSelect aria-label="Menu set" defaultValue="Polygons">
            <option>Polygons</option>
          </ModeSelect>
          <Divider $slim />
          <Toolbar items={statusItems} />
          <Spacer />
          <ToolButton $pressed aria-label="Channel box"><Icon name="channelBox" /></ToolButton>
          <ToolButton aria-label="Tool settings"><Icon name="toolSettings" /></ToolButton>
          <ToolButton $pressed aria-label="Layer editor"><Icon name="layerEditor" /></ToolButton>
        </StatusLine>

        <Shelf>
          <Grip />
          <ShelfSide>
            <ShelfSwitch aria-label="Switch shelf" />
            <DownArrow />
          </ShelfSide>
          <ShelfMain>
            <ShelfTabs>
              {shelfTabs.map((name) => (
                <Tab key={name} $active={shelf === name} onClick={() => setShelf(name)}>{name}</Tab>
              ))}
              <Spacer />
              <ToolButton $small aria-label="Delete"><Icon name="trash" size={16} /></ToolButton>
            </ShelfTabs>
            <ShelfBody>
              <ShelfItems>
                <ShelfButton aria-label="Custom script">
                  <svg width="30" height="32" viewBox="0 0 30 32">
                    <ellipse cx="15" cy="16" rx="14" ry="15" fill="#ddd" stroke="#888" />
                    <ellipse cx="15" cy="16" rx="12" ry="13" fill="#12568f" />
                    <ellipse cx="15" cy="22" rx="9" ry="6" fill="#3c9ade" />
                    <ellipse cx="15" cy="10" rx="10" ry="6" fill="#8fb4d0" />
                    <path d="M7 16l5 6L23 9" fill="none" stroke="#fff" strokeWidth="4" />
                  </svg>
                </ShelfButton>
                <Spacer />
                <ShelfScroll>
                  <ScrollArrow dir="up" />
                  <ScrollArrow dir="down" />
                </ShelfScroll>
              </ShelfItems>
            </ShelfBody>
          </ShelfMain>
        </Shelf>

        <Workspace>
          <ToolBox>
            <ToolColumn>
              <TopGrip />
              {tools.map((name) => (
                <BoxTool key={name} $active={tool === name} aria-label={name} onClick={() => setTool(name)}>
                  <svg width="32" height="32" viewBox="1 1 34 34">{toolIcons[name]}</svg>
                </BoxTool>
              ))}
              <LayoutGroup>
                {layouts.map((name) => (
                  <LayoutButton key={name} aria-label={name}>
                    <svg width="32" height="32" viewBox="0 0 34 34">{layoutIcons[name]}</svg>
                  </LayoutButton>
                ))}
              </LayoutGroup>
              <MoreLayouts aria-label="More layouts"><DownArrow size={7} /></MoreLayouts>
            </ToolColumn>
            <HomeButton aria-label="Maya home">
              <svg width="24" height="26" viewBox="0 0 24 26">
                <g fill="none" stroke="#c0c0c0" strokeWidth="1.8" strokeLinecap="round">
                  <path d="M5 5c8-4 15 3 15 9 0 4-1 7-3 9" />
                  <path d="M5 5c6 1 9 4 8 8s-1 6 4 10" />
                  <path d="M9 8c2 5-4 6-4 11 0 3 4 5 9 5" />
                  <path d="M11 12c-1 4-3 4-3 7s3 3 5 4M15 9c2 3 2 7 1 11" stroke="#8c8c8c" />
                </g>
              </svg>
            </HomeButton>
          </ToolBox>

          <ViewPanel>
            <Menu $height={19}>
              {['View', 'Shading', 'Lighting', 'Show', 'Renderer', 'Panels'].map((name) => (
                <button key={name}>{name}</button>
              ))}
            </Menu>
            <PanelBar>
              <Toolbar items={panelItems} small />
            </PanelBar>
            <Canvas>
              <Easel />
            </Canvas>
          </ViewPanel>

          <Dock>
            <DockGrip />
            <LayerEditor />
            <SideTabs>
              <SideTab $active>Channel Box / Layer Editor</SideTab>
              <SideTab>Attribute Editor</SideTab>
            </SideTabs>
          </Dock>
        </Workspace>

        <TimeRow>
          <Grip />
          <TimeSlider>
            {frames.map((frame) => (
              <Frame key={frame} $current={frame === 1}>
                <span>{frame}</span>
                {frame === 1 && <b>1</b>}
              </Frame>
            ))}
          </TimeSlider>
          <Field $short aria-label="Current time" defaultValue="1.00" />
          <PlayBar>
            {Object.entries(playIcons).map(([name, d]) => (
              <PlayButton key={name} aria-label={name}>
                <svg width="18" height="16" viewBox="0 0 20 16">
                  <path d={d} fill="#c4c4c4" stroke="#222" strokeWidth=".6" />
                  {name === 'Step back key' && <path d="M3.5 0v16" stroke="#e02020" />}
                  {name === 'Step forward key' && <path d="M15.5 0v16" stroke="#e02020" />}
                </svg>
              </PlayButton>
            ))}
          </PlayBar>
        </TimeRow>

        <RangeRow>
          <Grip />
          <Field $short aria-label="Animation start" defaultValue="1.00" />
          <Field $short aria-label="Playback start" defaultValue="1.00" />
          <Range>
            <RangeThumb>
              <i />
              <span>1</span>
              <Spacer />
              <span>24</span>
              <i />
            </RangeThumb>
          </Range>
          <Field $short aria-label="Playback end" defaultValue="24.00" />
          <Field $short aria-label="Animation end" defaultValue="48.00" />
          <SmallButton aria-label="Anim layer menu"><DownArrow /></SmallButton>
          <DarkSelect aria-label="Anim layer"><option>No Anim Layer</option></DarkSelect>
          <SmallButton aria-label="Character set menu"><DownArrow /></SmallButton>
          <DarkSelect aria-label="Character set"><option>No Character Set</option></DarkSelect>
          <SmallButton aria-label="Auto key"><Icon name="key" size={16} /></SmallButton>
          <SmallButton aria-label="Preferences"><Icon name="prefs" size={14} /></SmallButton>
        </RangeRow>

        <CommandRow>
          <Grip />
          <label htmlFor="mel">MEL</label>
          <Field id="mel" $fill />
          <CommandResult />
          <SmallButton aria-label="Script editor"><Icon name="scriptEditor" size={14} /></SmallButton>
        </CommandRow>

        <HelpRow>
          <Grip />
          <p>Select Tool: select an object</p>
        </HelpRow>

        <Taskbar>
          {taskbarMarks.map((color, index) => (
            <TaskItem key={index} $color={color} $active={index === 4} />
          ))}
          <Spacer />
          <time>22:11</time>
        </Taskbar>

        <Outliner />
      </Container>
    </>
  );
}

export default App;

const GlobalStyle = createGlobalStyle`
  * {
    box-sizing: border-box;
  }

  body {
    margin: 0;
    background: #444;
    color: #c8c8c8;
    font: 11px/14px Roboto, 'Noto Sans', sans-serif;
    overflow: hidden;
  }

  button, input, select {
    margin: 0;
    padding: 0;
    border: 0;
    background: none;
    color: inherit;
    font: inherit;
  }

  svg {
    display: block;
    flex-shrink: 0;
  }
`;

const raised = css`
  border: 1px solid #2a2a2a;
  background: linear-gradient(#666, #505050);
`;

const dotted = css`
  background-image: radial-gradient(circle, #6a6a6a 1px, transparent 1px);
  background-size: 4px 6px;
`;

const Container = styled.div`
  position: relative;
  display: flex;
  flex-direction: column;
  height: 100vh;
  overflow: hidden;
`;

const Spacer = styled.div`
  flex: 1;
`;

const TitleBar = styled.header`
  display: flex;
  align-items: center;
  height: 31px;
  padding-left: 8px;
  background: #da3b01;
  border-top: 1px solid #d9501c;
  color: #fff;

  h1 {
    flex: 1;
    margin: 0;
    padding-left: 5px;
    font: 12px/16px Lato, 'Open Sans', sans-serif;
    white-space: nowrap;
  }
`;

const WindowButton = styled.button`
  display: flex;
  align-items: center;
  justify-content: center;
  width: 46px;
  height: 28px;
`;

const Menu = styled.nav`
  display: flex;
  align-items: center;
  flex-shrink: 0;
  gap: 14px;
  height: ${(props) => props.$height}px;
  padding: 2px 8px 0;

  ${(props) => props.$ruled && 'border-bottom: 1px solid #2c2c2c;'}

  button {
    white-space: nowrap;
  }
`;

const Grip = styled.div`
  ${dotted}
  width: 6px;
  align-self: stretch;
  margin: 4px 0 4px 5px;
  flex-shrink: 0;
`;

const StatusLine = styled.div`
  display: flex;
  align-items: center;
  gap: 2px;
  height: 33px;
  padding-right: 3px;
  border-bottom: 1px solid #363636;
`;

const ModeSelect = styled.select`
  ${raised}
  appearance: none;
  width: 99px;
  height: 19px;
  margin-bottom: 5px;
  padding: 0 3px;
  background: linear-gradient(45deg, transparent 50%, #bbb 50%) no-repeat 86px 7px / 4px 4px,
    linear-gradient(-45deg, transparent 50%, #bbb 50%) no-repeat 90px 7px / 4px 4px,
    linear-gradient(#2c2c2c, #2c2c2c) no-repeat 81px 0 / 1px 100%,
    linear-gradient(#666, #505050);
`;

const buttonWidth = ({ $small, $narrow }) => {
  if ($narrow || $small) return '18px';
  return '24px';
};

const ToolButton = styled.button`
  display: flex;
  align-items: center;
  justify-content: center;
  flex-shrink: 0;
  width: ${buttonWidth};
  height: ${(props) => (props.$small ? '18px' : '25px')};
  border: 1px solid transparent;
  border-radius: 2px;

  ${(props) =>
    props.$pressed &&
    css`
      border-color: #262626;
      background: #5c5c5c;
    `}
`;

const dividerWidth = ({ $small, $wide, $arrow, $slim }) => {
  if ($slim) return '6px';
  if ($wide) return '11px';
  if ($arrow) return '10px';
  return $small ? '9px' : '8px';
};

const Divider = styled.span`
  flex-shrink: 0;
  width: ${dividerWidth};
  height: ${(props) => (props.$small ? '14px' : '24px')};
  background: linear-gradient(#777, #777) no-repeat center / 3px 8px,
    linear-gradient(#262626, #262626) no-repeat center / 1px 100%;

  ${(props) =>
    props.$arrow &&
    css`
      background: linear-gradient(45deg, #888 50%, transparent 50%) no-repeat 4px 9px / 4px 4px,
        linear-gradient(135deg, #888 50%, transparent 50%) no-repeat 4px 13px / 4px 4px,
        linear-gradient(#262626, #262626) no-repeat 2px / 1px 100%;
    `}
`;

const Shelf = styled.div`
  display: flex;
  height: 73px;
  padding: 3px 6px 3px 0;
  border-bottom: 1px solid #363636;
`;

const ShelfSide = styled.div`
  display: flex;
  flex-direction: column;
  align-items: center;
  justify-content: flex-end;
  gap: 4px;
  width: 22px;
  margin-left: 3px;
  padding-bottom: 4px;
  border: 1px solid #2c2c2c;
  border-right-color: #5a5a5a;
  border-bottom-color: #5a5a5a;
`;

const ShelfSwitch = styled.button`
  width: 12px;
  height: 10px;
  background: #666;
  box-shadow: 0 5px 0 -1px #444, 0 6px 0 -1px #ccc;
`;

const ShelfMain = styled.div`
  display: flex;
  flex-direction: column;
  flex: 1;
  margin-left: 2px;
  min-width: 0;
`;

const ShelfTabs = styled.div`
  display: flex;
  align-items: flex-end;
  height: 21px;
`;

const Tab = styled.button`
  height: ${(props) => (props.$active ? '21px' : '18px')};
  padding: 2px 12px 0 11px;
  border: 1px solid #2a2a2a;
  border-left-width: 0;
  border-bottom: 0;
  border-radius: 2px 2px 0 0;
  background: ${(props) => (props.$active ? '#5e5e5e' : 'linear-gradient(#484848, #3e3e3e)')};

  &:first-child {
    border-left-width: 1px;
  }
`;

const ShelfBody = styled.div`
  flex: 1;
  padding: 3px 2px 2px;
  border: 1px solid #2a2a2a;
  border-top-color: #686868;
  border-radius: 2px;
`;

const ShelfItems = styled.div`
  display: flex;
  align-items: center;
  height: 38px;
  padding: 0 2px;
  border: 1px solid #2a2a2a;
`;

const ShelfButton = styled.button`
  display: flex;
`;

const ShelfScroll = styled.div`
  display: flex;
  flex-direction: column;
  gap: 4px;
`;

const Workspace = styled.main`
  display: flex;
  flex: 1;
  min-height: 0;
  padding: 2px 0 1px;
`;

const ToolBox = styled.aside`
  display: flex;
  flex-direction: column;
  align-items: center;
  gap: 3px;
  width: 42px;
  margin-right: 4px;
  padding: 0 0 5px 3px;
`;

const ToolColumn = styled.div`
  display: flex;
  flex-direction: column;
  flex: 1;
  gap: 2px;
  width: 39px;
  padding: 4px 2px 0 1px;
  border: 1px solid #2c2c2c;
  border-right-color: #666;
  border-top: 0;
  border-bottom-color: #666;
`;

const TopGrip = styled.div`
  ${dotted}
  height: 6px;
`;

const BoxTool = styled.button`
  display: flex;
  align-items: center;
  justify-content: center;
  width: 34px;
  height: 35px;
  flex-shrink: 0;
  border: 1px solid #666;
  outline: 1px solid #2e2e2e;
  border-radius: 2px;
  background: ${(props) => (props.$active ? '#a0a0a0' : '#444')};
`;

const LayoutGroup = styled.div`
  display: flex;
  flex-direction: column;
  gap: 4px;
  margin-top: 12px;
`;

const LayoutButton = styled.button`
  width: 34px;
  height: 34px;
  border: 1px solid #2a2a2a;
  border-radius: 2px;
  background: linear-gradient(135deg, #f4f4f4, #b4b4b4);
  overflow: hidden;
`;

const MoreLayouts = styled.button`
  display: flex;
  align-items: center;
  justify-content: center;
  width: 32px;
  height: 32px;
  border: 1px solid #2e2e2e;
  border-top-color: #666;
  border-left-color: #666;
`;

const HomeButton = styled.button`
  display: flex;
  align-items: center;
  justify-content: center;
  width: 31px;
  height: 31px;
  border: 1px solid #111;
  outline: 1px solid #666;
  border-radius: 3px;
  background: linear-gradient(#222, #555);
`;

const ViewPanel = styled.section`
  display: flex;
  flex-direction: column;
  flex: 1;
  min-width: 0;
  border: 1px solid #8a8a8a;
`;

const PanelBar = styled.div`
  display: flex;
  align-items: center;
  gap: 2px;
  height: 21px;
  padding-bottom: 1px;
  flex-shrink: 0;
`;

const Canvas = styled.div`
  flex: 1;
  min-height: 0;
  background: linear-gradient(#8093a9, #18191a);
`;

const Scene = styled.svg`
  width: 100%;
  height: 100%;
  font-family: 'DejaVu Sans', sans-serif;
`;

const Dock = styled.aside`
  display: flex;
  width: 315px;
`;

const DockGrip = styled.div`
  ${dotted}
  width: 4px;
  margin: 254px 4px 256px 3px;
`;

const LayerPanel = styled.div`
  display: flex;
  flex-direction: column;
  width: 280px;
  margin: auto 5px 2px 0;
`;

const LayerTabs = styled.div`
  display: flex;
  align-items: flex-end;
`;

const LayerBox = styled.div`
  display: flex;
  flex-direction: column;
  height: 238px;
  border: 1px solid #2c2c2c;
  border-left-color: #5a5a5a;
`;

const LayerTools = styled.div`
  display: flex;
  align-items: center;
  justify-content: flex-end;
  gap: 7px;
  height: 26px;
  padding-right: 6px;
`;

const LayerList = styled.div`
  display: flex;
  flex-direction: column;
  justify-content: space-between;
  flex: 1;
  margin: 0 4px 3px 2px;
  padding: 2px 1px;
  border: 1px solid #222;
  background: #2b2b2b;
`;

const LayerRow = styled.div`
  display: flex;
  align-items: center;
  gap: 3px;
  height: 20px;
  padding-left: 3px;
  background: #6891b9;
  color: #111;
  white-space: nowrap;
`;

const LayerToggle = styled.button`
  width: 20px;
  height: 14px;
  flex-shrink: 0;
  border: 1px solid #3f5d7c;
  border-radius: 2px;
  line-height: 12px;
`;

const SideTabs = styled.div`
  display: flex;
  flex-direction: column;
  width: 19px;
`;

const SideTab = styled.button`
  writing-mode: vertical-rl;
  width: ${(props) => (props.$active ? '19px' : '17px')};
  padding: 12px 3px 12px 0;
  border: 1px solid #2c2c2c;
  border-left: 0;
  border-radius: 0 3px 3px 0;
  background: ${(props) => (props.$active ? '#5e5e5e' : '#444')};
  white-space: nowrap;
`;

const OutlinerWindow = styled.section`
  position: absolute;
  top: 136px;
  right: 18px;
  display: flex;
  flex-direction: column;
  width: 286px;
  height: 519px;
  background: #444;
  border: 1px solid #555;
  border-width: 0 1px 1px 0;
  box-shadow: 0 3px 12px rgba(0, 0, 0, 0.4);
`;

const OutlinerTitle = styled.header`
  display: flex;
  align-items: center;
  height: 30px;
  padding: 0 0 0 8px;
  background: #fff;
  color: #999;

  span {
    flex: 1;
    padding-left: 5px;
    font-size: 12px;
    line-height: 16px;
  }
`;

const SearchRow = styled.div`
  display: flex;
  align-items: center;
  gap: 6px;
  height: 26px;
  padding: 0 3px 2px 5px;

  input {
    flex: 1;
    width: auto;
  }
`;

const Field = styled.input`
  width: ${(props) => (props.$short ? '68px' : 'auto')};
  height: ${(props) => (props.$fill ? '24px' : '19px')};
  ${(props) => props.$fill && 'flex: 1;'}
  min-width: 0;
  flex-shrink: 0;
  padding: 0 4px;
  border: 1px solid #555;
  border-radius: 2px;
  background: #2b2b2b;
`;

const OutlinerBody = styled.div`
  display: flex;
  flex: 1;
  gap: 2px;
  padding: 0 3px;
`;

const Tree = styled.ul`
  flex: 1;
  margin: 0;
  padding: 0;
  list-style: none;
  background: #2b2b2b;
`;

const TreeRow = styled.li`
  display: flex;
  align-items: center;
  height: 20px;
  color: ${(props) => (props.$dim ? '#666' : '#c8c8c8')};
`;

const NodeName = styled.span`
  padding-top: 2px;
`;

const Expander = styled.span`
  width: 43px;
  padding-left: 2px;
`;

const ScrollBar = styled.div`
  display: flex;
  flex-direction: ${(props) => (props.$vertical ? 'column' : 'row')};
  gap: 2px;
  padding: ${(props) => (props.$inset ? '1px 20px 1px 4px' : '0')};
`;

const ScrollButton = styled.button`
  display: flex;
  align-items: center;
  justify-content: center;
  width: 14px;
  height: 14px;
  flex-shrink: 0;
  border: 1px solid #666;
  outline: 1px solid #262626;
`;

const Thumb = styled.div`
  display: flex;
  align-items: center;
  justify-content: center;
  flex: ${(props) => (props.$flat ? '1' : '3')};
  border: 1px solid #666;
  background: ${(props) => (props.$flat ? '#444' : 'linear-gradient(#6a6a6a, #585858)')};
`;

const Track = styled.div`
  flex: 1;
  background: #353535;
`;

const Dots = styled.span`
  width: 20px;
  height: 10px;
  background: radial-gradient(circle, #222 1px, transparent 1px) 0 0 / 4px 4px;
`;

const BottomGrip = styled.div`
  ${dotted}
  width: 90px;
  height: 6px;
  margin: 0 auto 2px;
`;

const TimeRow = styled.div`
  display: flex;
  align-items: center;
  height: 37px;
  border-top: 1px solid #363636;
  border-bottom: 1px solid #363636;
`;

const TimeSlider = styled.div`
  display: flex;
  flex: 1;
  height: 30px;
  margin: 0 3px;
  padding: 0 8px 0 7px;
  border-top: 1px solid #222;
  border-bottom: 1px solid #5c5c5c;
  background: #747474;
`;

const Frame = styled.div`
  display: flex;
  flex-direction: column;
  gap: 2px;
  flex: 1;
  padding-left: 13px;
  background: linear-gradient(#000, #000) no-repeat 0 100% / 2px 14px;
  background-color: ${(props) => (props.$current ? '#5c5c5c' : 'transparent')};
  color: #000;
  line-height: 11px;

  b {
    color: #fff;
    font-weight: 400;
  }
`;

const PlayBar = styled.div`
  display: flex;
  align-items: center;
  justify-content: space-between;
  width: 230px;
  padding: 0 9px;
`;

const PlayButton = styled.button`
  display: flex;
`;

const RangeRow = styled.div`
  display: flex;
  align-items: center;
  gap: 4px;
  height: 29px;
  padding-right: 4px;
  border-bottom: 1px solid #363636;

  ${Grip} {
    margin-right: -1px;
  }
`;

const Range = styled.div`
  flex: 1;
  height: 22px;
  padding: 3px 6px 3px 8px;
  border-bottom: 1px solid #666;
  border-right: 1px solid #666;
  background: #262626;
`;

const RangeThumb = styled.div`
  display: flex;
  align-items: center;
  gap: 4px;
  width: 50%;
  height: 17px;
  padding: 0 4px;
  background: #666;

  i {
    width: 10px;
    height: 12px;
    border: 1px solid #222;
    border-width: 0 1px 1px 0;
  }
`;

const SmallButton = styled.button`
  display: flex;
  align-items: center;
  justify-content: center;
  width: 16px;
  flex-shrink: 0;
`;

const DarkSelect = styled.select`
  appearance: none;
  width: 101px;
  height: 19px;
  padding: 0 3px;
  border: 1px solid #555;
  border-radius: 2px;
  background: #2b2b2b;
`;

const CommandRow = styled.div`
  display: flex;
  align-items: center;
  height: 31px;
  padding-right: 4px;
  border-bottom: 1px solid #363636;

  label {
    width: 48px;
    padding-left: 13px;
  }
`;

const CommandResult = styled.output`
  flex: 1;
  height: 25px;
  margin: 0 1px 0 7px;
  padding: 0 4px;
  border: 1px solid #222;
  background: #000;
`;

const HelpRow = styled.footer`
  display: flex;
  height: 20px;
  padding-top: 3px;

  p {
    flex: 1;
    margin: 0 3px 0 2px;
    padding: 4px 12px;
    border: 1px solid #222;
    border-width: 1px 0 0 1px;
    line-height: 14px;
  }
`;

const Taskbar = styled.div`
  display: flex;
  height: 9px;
  padding: 0 24px 0 195px;
  background: #0d0b0c;
  overflow: hidden;

  time {
    padding-top: 4px;
    color: #fff;
  }
`;

const TaskItem = styled.span`
  width: 49px;
  border: 0 solid transparent;
  border-width: 8px 12px 0;
  background: ${(props) => props.$color || 'transparent'};
  background-clip: padding-box;
  ${(props) => props.$active && 'background: #333;'}
`;
